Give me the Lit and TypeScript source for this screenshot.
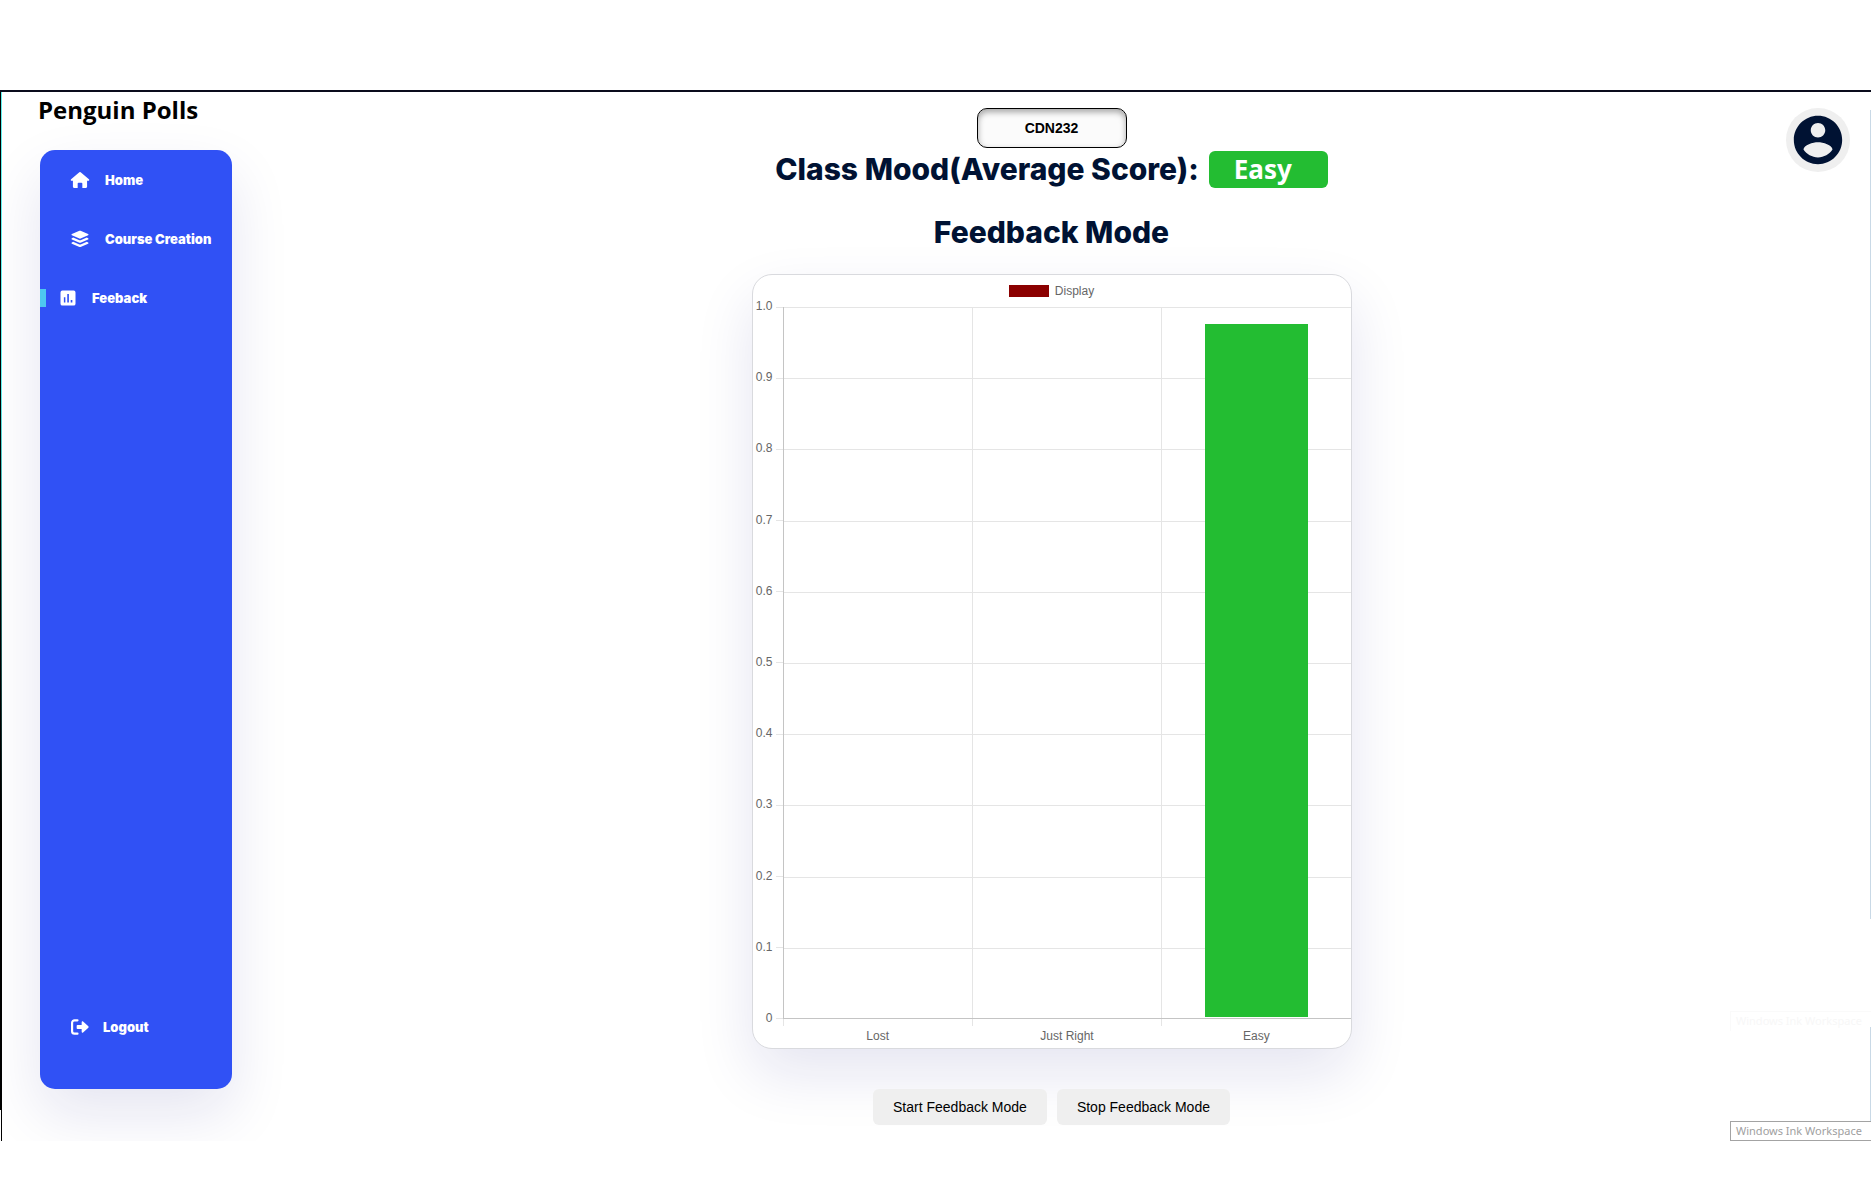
import { LitElement, html, css, svg } from "lit";
import { customElement, property } from "lit/decorators.js";

const icons = {
  home: svg`<path d="M11.200 2.800a1.200 1.200 0 0 1 1.600 0l9.900 8.300c.8.700.4 1.900-.6 1.900h-1.600v7.200c0 .8-.6 1.400-1.400 1.400h-4.300v-5.400c0-.6-.4-1-1-1h-3.600c-.6 0-1 .4-1 1v5.400H4.900c-.8 0-1.400-.6-1.400-1.400V13H1.900c-1 0-1.400-1.200-.6-1.900z"/>`,
  layers: svg`<path d="M11.300 2.200a1.800 1.800 0 0 1 1.400 0l9 3.900c.7.300.7 1.200 0 1.500l-9 3.900a1.800 1.800 0 0 1-1.400 0l-9-3.900c-.7-.3-.7-1.200 0-1.500z"/><path d="M3.800 10.300l7.500 3.200a1.800 1.800 0 0 0 1.400 0l7.500-3.200 1.500.7c.7.300.7 1.200 0 1.500l-9 3.900a1.800 1.800 0 0 1-1.400 0l-9-3.900c-.7-.3-.7-1.200 0-1.500z"/><path d="M3.800 15.400l7.500 3.200a1.800 1.800 0 0 0 1.400 0l7.500-3.200 1.500.7c.7.300.7 1.200 0 1.500l-9 3.900a1.800 1.800 0 0 1-1.400 0l-9-3.900c-.7-.3-.7-1.200 0-1.500z"/>`,
  poll: svg`<path fill-rule="evenodd" d="M4.500 2h15A2.500 2.500 0 0 1 22 4.500v15a2.500 2.500 0 0 1-2.500 2.500h-15A2.500 2.500 0 0 1 2 19.500v-15A2.500 2.500 0 0 1 4.500 2zM6.500 11v7h2v-7zM11 6.500V18h2.200V6.500zM15.600 14.500V18h2.200v-3.500z"/>`,
  logout: svg`<path d="M9 4H5.500a3 3 0 0 0-3 3v10a3 3 0 0 0 3 3H9" fill="none" stroke="currentColor" stroke-width="2.600" stroke-linecap="round"/><path d="M9 9.500h5V6.200c0-1 1-1.400 1.700-.7l6.300 5.700c.5.500.5 1.100 0 1.600l-6.300 5.700c-.7.700-1.700.3-1.700-.7v-3.300H9c-.6 0-1-.4-1-1v-3c0-.6.4-1 1-1z"/>`,
  user: svg`<path d="M12 2C6.480 2 2 6.480 2 12s4.480 10 10 10 10-4.480 10-10S17.520 2 12 2zm0 3c1.660 0 3 1.340 3 3s-1.340 3-3 3-3-1.340-3-3 1.340-3 3-3zm0 14.200c-2.500 0-4.710-1.280-6-3.220.030-1.990 4-3.080 6-3.080 1.990 0 5.970 1.090 6 3.080-1.290 1.940-3.500 3.220-6 3.220z"/>`,
};

const icon = (name: keyof typeof icons) =>
  html`<svg class="icon" viewBox="0 0 24 24" fill="currentColor" aria-hidden="true">${icons[name]}</svg>`;

@customElement("poll-sidebar")
class PollSidebar extends LitElement {
  static styles = css`
    :host {
      display: flex;
      flex-direction: column;
      box-sizing: border-box;
      width: 192px;
      padding: 15px 0 47px;
      border-radius: 15px;
      background: #3051f5;
      box-shadow: 0 25px 60px rgba(20, 20, 130, 0.11);
    }
    nav {
      display: flex;
      flex-direction: column;
      flex: 1;
      gap: 29px;
    }
    .link {
      display: flex;
      align-items: center;
      gap: 15px;
      height: 30px;
      padding-left: 30px;
      color: #fff;
      font: 900 13px/30px Inter, sans-serif;
      white-space: nowrap;
      text-decoration: none;
    }
    .active {
      padding-left: 0;
    }
    .active::before {
      content: "";
      width: 6px;
      height: 18px;
      margin-right: -2px;
      background: #4dc8f0;
    }
    .bottom {
      gap: 13px;
      margin-top: auto;
    }
    .icon {
      width: 20px;
      height: 20px;
      flex: none;
    }
    .small {
      display: contents;
    }
    .small .icon {
      width: 18px;
      height: 18px;
    }
  `;

  render() {
    return html`
      <nav aria-label="Main">
        <a class="link" href="#home">${icon("home")}Home</a>
        <a class="link" href="#courses">${icon("layers")}Course Creation</a>
        <a class="link active" href="#feedback" aria-current="page"><span class="small">${icon("poll")}</span>Feeback</a>
        <a class="link bottom" href="#logout">${icon("logout")}Logout</a>
      </nav>
    `;
  }
}

@customElement("mood-chart")
class MoodChart extends LitElement {
  @property({ attribute: false }) bars: { label: string; value: number }[] = [];

  static styles = css`
    :host {
      display: flex;
      flex-direction: column;
      box-sizing: border-box;
      overflow: hidden;
      border: 1px solid #d9dade;
      border-radius: 20px;
      background: #fff;
      box-shadow: 0 25px 60px rgba(20, 20, 130, 0.11);
      color: #666;
      font: 12px/14px "Liberation Sans", Arial, sans-serif;
    }
    .legend {
      display: flex;
      align-items: center;
      justify-content: center;
      gap: 6px;
      height: 32px;
      line-height: 12px;
    }
    .swatch {
      width: 40px;
      height: 12px;
      background: #8b0000;
    }
    .body {
      display: grid;
      grid-template-columns: 20px 10px 1fr;
      flex: 1;
    }
    .scale {
      display: flex;
      flex-direction: column;
      justify-content: space-between;
      margin: -8px 0 -6px;
      text-align: right;
    }
    .ticks,
    .grid {
      display: flex;
      flex-direction: column;
    }
    .ticks {
      margin-left: 3px;
      border-bottom: 1px solid #e5e5e5;
    }
    .step {
      flex: 1;
      border-top: 1px solid #e5e5e5;
    }
    .plot {
      display: grid;
    }
    .grid,
    .columns {
      grid-area: 1 / 1;
    }
    .columns {
      display: grid;
      grid-auto-flow: column;
      grid-auto-columns: 1fr;
      border-bottom: 1px solid #c4c4c4;
    }
    .column {
      display: flex;
      align-items: flex-end;
      justify-content: center;
      border-left: 1px solid #e5e5e5;
    }
    .column:first-child {
      border-color: #c4c4c4;
    }
    .bar {
      width: 55%;
      margin-bottom: 1px;
      background: #23bd32;
    }
    .labels {
      display: grid;
      grid-auto-flow: column;
      grid-auto-columns: 1fr;
      margin-left: 30px;
      height: 29px;
      text-align: center;
    }
    .name {
      border-left: 1px solid #e5e5e5;
      height: 7px;
    }
    .caption {
      display: block;
      padding-top: 10px;
    }
  `;

  render() {
    const scale = ["1.0", "0.9", "0.8", "0.7", "0.6", "0.5", "0.4", "0.3", "0.2", "0.1", "0"];
    const steps = scale.slice(1).map(() => html`<div class="step"></div>`);
    return html`
      <div class="legend"><span class="swatch"></span>Display</div>
      <div class="body">
        <div class="scale">${scale.map((s) => html`<span>${s}</span>`)}</div>
        <div class="ticks">${steps}</div>
        <div class="plot">
          <div class="grid">${steps}</div>
          <div class="columns">
            ${this.bars.map(
              (b) => html`<div class="column">
                ${b.value ? html`<div class="bar" style="height:${b.value * 100}%"></div>` : null}
              </div>`
            )}
          </div>
        </div>
      </div>
      <div class="labels">
        ${this.bars.map((b) => html`<div class="name"><span class="caption">${b.label}</span></div>`)}
      </div>
    `;
  }
}

@customElement("app-root")
class AppRoot extends LitElement {
  static styles = css`
    :host {
      display: block;
      box-sizing: border-box;
      min-height: 100vh;
      padding: 90px 0 59px;
      background: #fff;
      color: #001233;
      font-family: Inter, sans-serif;
    }
    .frame {
      position: relative;
      display: grid;
      grid-template-columns: 194px 1fr;
      box-sizing: border-box;
      min-height: calc(100vh - 149px);
      overflow: hidden;
      border-top: 2px solid #0a0c1c;
      padding-left: 38px;
    }
    .edge {
      position: absolute;
      inset: 0 auto 0 0;
      width: 1px;
      border-right: 1px solid #000;
      background: linear-gradient(#000, #000) 0 0 / 1px calc(100% - 31px) no-repeat;
    }
    .glow {
      position: absolute;
      inset: 0 auto 30% 1px;
      width: 1px;
      background: linear-gradient(#5ff0ee, #5ff0ee 40%, #000);
    }
    .scroll {
      position: absolute;
      inset: 18px 0 222px auto;
      width: 1px;
      background: #c9d9e6;
    }
    .scroll.lower {
      inset: auto 0 20px auto;
      height: 94px;
    }
    .left {
      display: flex;
      flex-direction: column;
      padding-bottom: 52px;
    }
    .brand {
      margin: 0;
      height: 58px;
      color: #000;
      font: 700 24px/36px "Open Sans", sans-serif;
      white-space: nowrap;
    }
    poll-sidebar {
      flex: 1;
      margin-left: 2px;
    }
    main {
      grid-area: 1 / 2;
      display: flex;
      flex-direction: column;
      align-items: center;
      padding: 16px 0;
    }
    .code {
      box-sizing: border-box;
      width: 150px;
      height: 40px;
      border: 1px solid #000;
      border-radius: 10px;
      background: #fbfbfb;
      box-shadow: inset 0 3px 6px rgba(0, 0, 0, 0.35);
      color: #000;
      font: 700 14px/38px "Liberation Sans", Arial, sans-serif;
      text-align: center;
    }
    .mood,
    .mode {
      margin: 0;
      font-weight: 800;
      font-size: 30px;
      line-height: 42px;
      white-space: nowrap;
    }
    .mood {
      display: flex;
      align-items: center;
      gap: 10px;
    }
    .badge {
      box-sizing: border-box;
      width: 119px;
      height: 37px;
      padding-left: 25px;
      border-radius: 6px;
      background: #23bd32;
      color: #fff;
      font: 700 26px/36px "Noto Sans", sans-serif;
    }
    .mode {
      margin-top: 21px;
    }
    mood-chart {
      width: 600px;
      max-width: 100%;
      flex: 1;
      margin-top: 21px;
    }
    .actions {
      display: flex;
      gap: 10px;
      margin-top: 40px;
    }
    .action {
      position: relative;
      height: 36px;
      padding: 0 20px;
      border: 0;
      border-radius: 6px;
      background: #efefef;
      color: #000;
      font: 14px/36px "Liberation Sans", Arial, sans-serif;
    }
    .avatar {
      grid-area: 1 / 2;
      justify-self: end;
      display: grid;
      place-items: center;
      width: 64px;
      height: 64px;
      margin: 16px 21px 0 0;
      padding: 0;
      border: 0;
      border-radius: 50%;
      background: #efefef;
      color: #001233;
    }
    .icon {
      width: 58px;
      height: 58px;
    }
    .tip {
      position: absolute;
      right: 0;
      bottom: 0;
      box-sizing: border-box;
      width: 141px;
      height: 20px;
      padding-left: 5px;
      border: 1px solid #a3a3a3;
      border-right: 0;
      background: #fff;
      color: #a0a0a0;
      font: 11px/18px "Noto Sans", sans-serif;
      white-space: nowrap;
    }
    .faded {
      bottom: 110px;
      border-color: #fafafa;
      border-bottom: 0;
      color: #f7f7f7;
    }
  `;

  render() {
    return html`
      <div class="frame">
        <div class="edge"></div>
        <div class="glow"></div>
        <div class="left">
          <p class="brand">Penguin Polls</p>
          <poll-sidebar></poll-sidebar>
        </div>
        <main>
          <div class="code">CDN232</div>
          <h1 class="mood">Class Mood(Average Score): <span class="badge">Easy</span></h1>
          <h2 class="mode">Feedback Mode</h2>
          <mood-chart
            .bars=${[
              { label: "Lost", value: 0 },
              { label: "Just Right", value: 0 },
              { label: "Easy", value: 0.975 },
            ]}
          ></mood-chart>
          <div class="actions">
            <button class="action" type="button">Start Feedback Mode</button>
            <button class="action" type="button">Stop Feedback Mode</button>
          </div>
        </main>
        <button class="avatar" type="button" aria-label="Account">${icon("user")}</button>
        <div class="tip faded" aria-hidden="true">Windows Ink Workspace</div>
        <div class="tip" role="tooltip">Windows Ink Workspace</div>
        <div class="scroll"></div>
        <div class="scroll lower"></div>
      </div>
    `;
  }
}
